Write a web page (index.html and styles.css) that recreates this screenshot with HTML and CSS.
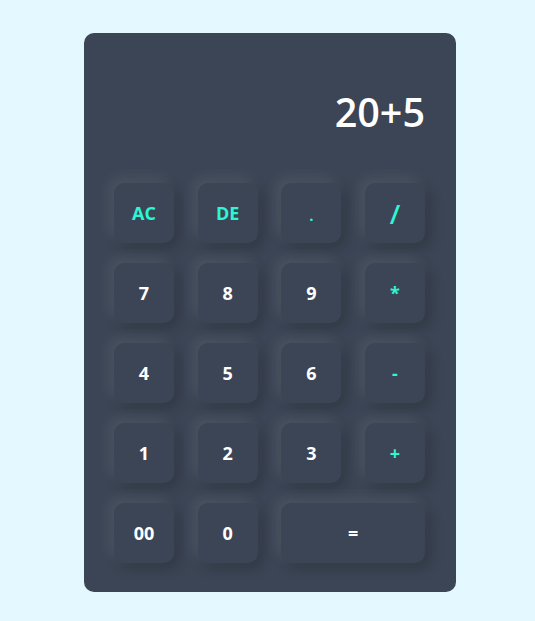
FILE: index.html
```html
<!DOCTYPE html>
<html lang="en">
<head>
<meta charset="utf-8">
<title>Calculator</title>
<link rel="stylesheet" href="styles.css">
</head>
<body>
<div class="page">
  <div class="calculator">
    <div class="display">20+5</div>
    <div class="keys">
      <button class="key op">AC</button>
      <button class="key op">DE</button>
      <button class="key op dot">.</button>
      <button class="key op slash">/</button>
      <button class="key">7</button>
      <button class="key">8</button>
      <button class="key">9</button>
      <button class="key op">*</button>
      <button class="key">4</button>
      <button class="key">5</button>
      <button class="key">6</button>
      <button class="key op">-</button>
      <button class="key">1</button>
      <button class="key">2</button>
      <button class="key">3</button>
      <button class="key op">+</button>
      <button class="key">00</button>
      <button class="key">0</button>
      <button class="key wide">=</button>
    </div>
  </div>
</div>
</body>
</html>
```
FILE: styles.css
```css
* { box-sizing: border-box; }

html, body {
  margin: 0;
  padding: 0;
  background: #e3f8ff;
  font-family: "Open Sans", "DejaVu Sans", sans-serif;
}

.page {
  display: flex;
  padding: 33px 79px 29px 84px;
}

.calculator {
  width: 372px;
  height: 559px;
  background: #3c4555;
  border-radius: 10px;
  padding: 30px 31px 29px 30px;
}

.display {
  height: 120px;
  padding-top: 22px;
  text-align: right;
  color: #ffffff;
  font-size: 39.5px;
  font-weight: 600;
  line-height: 54px;
}

.keys {
  display: grid;
  grid-template-columns: repeat(4, 60px);
  grid-auto-rows: 60px;
  column-gap: 23.67px;
  row-gap: 20px;
}

.key {
  border: none;
  outline: none;
  background: #3c4555;
  border-radius: 10px;
  color: #ffffff;
  font-family: inherit;
  font-size: 18px;
  font-weight: 700;
  padding: 0;
  box-shadow: -5px -5px 14px rgba(255, 255, 255, 0.09),
              5px 5px 14px rgba(0, 0, 0, 0.2);
}

.key.op {
  color: #2ef5d3;
}

.key.slash {
  font-size: 27px;
  font-weight: 600;
}

.key.dot {
  font-size: 15px;
  padding-top: 4px;
}

.key.wide {
  grid-column: span 2;
}
```
